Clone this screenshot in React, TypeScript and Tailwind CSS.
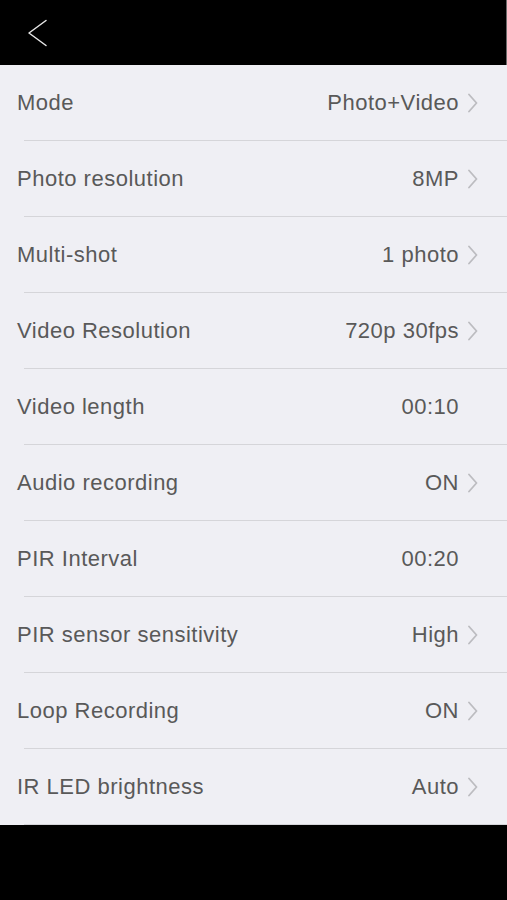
import React from 'react';

interface Row {
    label: string;
    value: string;
    arrow: boolean;
}

const rows: Row[] = [
    { label: 'Mode', value: 'Photo+Video', arrow: true },
    { label: 'Photo resolution', value: '8MP', arrow: true },
    { label: 'Multi-shot', value: '1 photo', arrow: true },
    { label: 'Video Resolution', value: '720p 30fps', arrow: true },
    { label: 'Video length', value: '00:10', arrow: false },
    { label: 'Audio recording', value: 'ON', arrow: true },
    { label: 'PIR Interval', value: '00:20', arrow: false },
    { label: 'PIR sensor sensitivity', value: 'High', arrow: true },
    { label: 'Loop Recording', value: 'ON', arrow: true },
    { label: 'IR LED brightness', value: 'Auto', arrow: true },
];

function Chevron({ visible }: { visible: boolean }) {
    return (
        <svg width="10" height="20" viewBox="0 0 10 20" className={visible ? '' : 'invisible'}>
            <path d="M1 1.5 L8.5 10 L1 18.5" fill="none" stroke="#bcbcc0" strokeWidth="1.8" strokeLinecap="round" strokeLinejoin="round" />
        </svg>
    );
}

export default function App() {
    return (
        <div
            className="w-[507px] h-[900px] flex flex-col bg-black"
            style={{ fontFamily: '"Liberation Sans", Arial, sans-serif' }}
        >
            {/* 顶部栏 */}
            <div className="h-[65px] shrink-0 flex items-center pl-[27px] bg-black border-r border-[#6b6b6b]">
                <svg width="22" height="28" viewBox="0 0 22 28">
                    <path d="M19 1.5 L2 14 L19 26.5" fill="none" stroke="#e6e6e6" strokeWidth="1.5" strokeLinecap="round" strokeLinejoin="round" />
                </svg>
            </div>

            {/* 设置列表 */}
            <div className="flex flex-col bg-[#efeff4]">
                {rows.map((row) => (
                    <div key={row.label}>
                        <div className="h-[75px] flex items-center justify-between pl-[17px] pr-[29px] text-[22px] tracking-[0.5px] text-[#595959]">
                            <span>{row.label}</span>
                            <div className="flex items-center gap-[9px]">
                                <span>{row.value}</span>
                                <Chevron visible={row.arrow} />
                            </div>
                        </div>
                        <div className="ml-6 h-px bg-[#d5d5d9]" />
                    </div>
                ))}
            </div>

            {/* 底部 */}
            <div className="flex-1 bg-black" />
        </div>
    );
}
